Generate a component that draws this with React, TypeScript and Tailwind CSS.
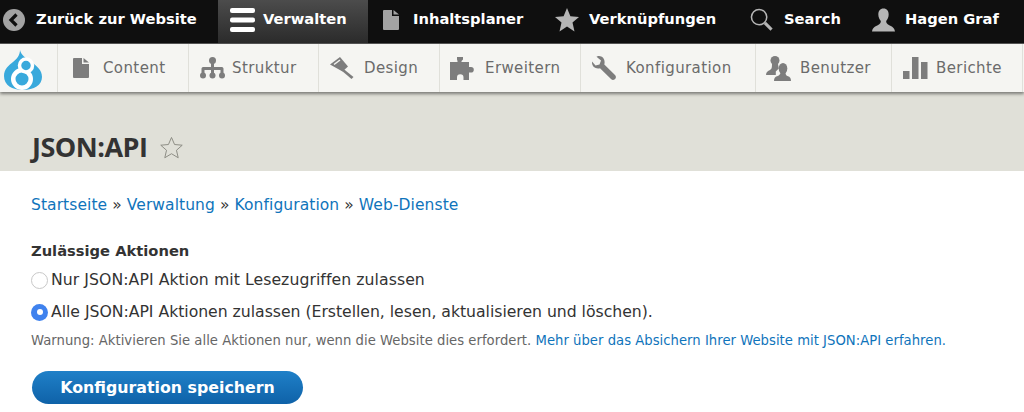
import { ReactNode } from "react";

const IconPage = ({ className }: { className: string }) => (
  <svg viewBox="0 0 16 20" className={className} fill="currentColor">
    <path d="M1 0h8v6h7v13a1 1 0 0 1-1 1H1a1 1 0 0 1-1-1V1a1 1 0 0 1 1-1z" />
    <path d="M10.5 0 16 4.5h-5.5z" />
  </svg>
);

const topItems: { label: string; width: string; gap: string; pad: string; icon: ReactNode; active?: boolean }[] = [
  {
    label: "Zurück zur Website",
    width: "w-[218px]",
    gap: "gap-[11px]",
    pad: "pl-[3px]",
    icon: (
      <svg viewBox="0 0 22 22" className="w-[22px] h-[22px]">
        <circle cx="11" cy="11" r="11" fill="#a3a3a3" />
        <path d="M13.5 5.5 8 11l5.5 5.5" fill="none" stroke="#0f0f0f" strokeWidth="3.2" />
      </svg>
    ),
  },
  {
    label: "Verwalten",
    width: "w-[150px]",
    gap: "gap-[8px]",
    pad: "pl-[12px]",
    active: true,
    icon: (
      <svg viewBox="0 0 25 24" className="w-[25px] h-[24px]" fill="#fff">
        <rect y="0" width="25" height="5" rx="2" />
        <rect y="9.5" width="25" height="5" rx="2" />
        <rect y="19" width="25" height="5" rx="2" />
      </svg>
    ),
  },
  {
    label: "Inhaltsplaner",
    width: "w-[172px]",
    gap: "gap-[14px]",
    pad: "pl-[15px]",
    icon: <IconPage className="w-[16px] h-[20px] text-[#a3a3a3]" />,
  },
  {
    label: "Verknüpfungen",
    width: "w-[195px]",
    gap: "gap-[10px]",
    pad: "pl-[15px]",
    icon: (
      <svg viewBox="0 0 24 24" className="w-[24px] h-[24px]" fill="#b5b5b5">
        <path d="M12 0l3.400 8.200 8.600.7-6.500 5.700 2 8.900L12 18.600l-7.500 4.900 2-8.900L0 8.900l8.600-.7z" />
      </svg>
    ),
  },
  {
    label: "Search",
    width: "w-[122px]",
    gap: "gap-[11px]",
    pad: "pl-[15px]",
    icon: (
      <svg viewBox="0 0 24 24" className="w-[23px] h-[23px]" fill="none" stroke="#b5b5b5">
        <circle cx="9.5" cy="9.5" r="8" strokeWidth="1.6" />
        <path d="M15.500 15.500 22.500 22.500" strokeWidth="3.2" />
      </svg>
    ),
  },
  {
    label: "Hagen Graf",
    width: "flex-1",
    gap: "gap-[10px]",
    pad: "pl-[15px]",
    icon: (
      <svg viewBox="0 0 24 24" className="w-[23px] h-[24px]" fill="#b5b5b5">
        <path d="M12 0c3.600 0 5.400 2.600 5.400 6.200 0 3-1.300 5.400-2.600 6.800 0 2 .6 3 3.200 4.400 3 1.400 5.400 2.400 6 6.600H0c.6-4.200 3-5.200 6-6.600 2.600-1.400 3.200-2.400 3.200-4.400C7.900 11.600 6.600 9.200 6.600 6.200 6.600 2.600 8.400 0 12 0z" />
      </svg>
    ),
  },
];

const menuItems: { label: string; width: string; gap: string; pad: string; icon: ReactNode }[] = [
  {
    label: "Content",
    width: "w-[131px]",
    gap: "gap-[14px]",
    pad: "pl-[15px]",
    icon: <IconPage className="w-[16px] h-[20px] text-[#7d7d7d]" />,
  },
  {
    label: "Struktur",
    width: "w-[130px]",
    gap: "gap-[7px]",
    pad: "pl-[11px]",
    icon: (
      <svg viewBox="0 0 25 22" className="w-[25px] h-[22px]" fill="#7d7d7d">
        <circle cx="12.500" cy="3.500" r="3.500" />
        <circle cx="3" cy="18.500" r="3" />
        <circle cx="12.500" cy="18.500" r="3" />
        <circle cx="22" cy="18.500" r="3" />
        <path d="M11 6h3v4h8a2 2 0 0 1 1.500 1.500V16h-3v-3h-6.500v3h-3v-3H4.500v3h-3v-4.500A2 2 0 0 1 3 10h8z" />
      </svg>
    ),
  },
  {
    label: "Design",
    width: "w-[121px]",
    gap: "gap-[10px]",
    pad: "pl-[11px]",
    icon: (
      <svg viewBox="0 0 24 22" className="w-[24px] h-[22px]">
        <path d="M0 7.500 10 0l8 9.500-5.500 5z" fill="#7d7d7d" />
        <path d="M4 7.500 10 3" fill="none" stroke="#f5f5f2" strokeWidth="1.5" />
        <path d="M13 11.500 23.500 20 21.500 22 11.500 13.500z" fill="#7d7d7d" />
      </svg>
    ),
  },
  {
    label: "Erweitern",
    width: "w-[141px]",
    gap: "gap-[10px]",
    pad: "pl-[10px]",
    icon: (
      <svg viewBox="0 0 25 23" className="w-[25px] h-[23px]" fill="#7d7d7d">
        <path d="M7 0h6v2.500l-1.500 1.500V5H19v5h2a2.800 2.800 0 1 1 0 5.600h-2V23h-5.500v-2.500a3.200 3.200 0 1 0-6.500 0V23H0V5h7.500V4L7 2.500z" />
      </svg>
    ),
  },
  {
    label: "Konfiguration",
    width: "w-[175px]",
    gap: "gap-[10px]",
    pad: "pl-[11px]",
    icon: (
      <svg viewBox="0 0 24 24" className="w-[24px] h-[24px]" fill="#7d7d7d">
        <path d="M7 0c-1 0-2 .3-2.500.7L9 4.500 7.500 8.500 3.500 9.500 0 5.500C-.5 9 2 12.500 6 12.500c1 0 1.500 0 2-.2L19 23c1.500 1.500 3.600 1 4.500-.5.700-1.200.5-2.500-.5-3.500L12.300 8.500C13.500 4 11 0 7 0z" />
      </svg>
    ),
  },
  {
    label: "Benutzer",
    width: "w-[136px]",
    gap: "gap-[9px]",
    pad: "pl-[10px]",
    icon: (
      <svg viewBox="0 0 25 25" className="w-[25px] h-[25px]" fill="#7d7d7d">
        <circle cx="9" cy="4.500" r="4.500" />
        <path d="M6 8h6l.8 4.500-3 3V19H0c0-3 2-4 4-5 1.500-1 2-2 2-6z" />
        <ellipse cx="17" cy="12.500" rx="4.300" ry="5.500" />
        <path d="M14.500 16.500h5c0 2 .5 3 2.500 3.800 1.800.7 3 1.700 3 4.700H8c0-3 1.200-4 3-4.700 2-.8 3.500-1.800 3.500-3.800z" />
      </svg>
    ),
  },
  {
    label: "Berichte",
    width: "w-[131px]",
    gap: "gap-[8px]",
    pad: "pl-[11px]",
    icon: (
      <svg viewBox="0 0 25 22" className="w-[25px] h-[22px]" fill="#7d7d7d">
        <rect x="0" y="14" width="6.500" height="8" />
        <rect x="9" y="0" width="6.500" height="22" />
        <rect x="18" y="5" width="6.500" height="17" />
      </svg>
    ),
  },
];

export default function App() {
  return (
    <div className="w-[1024px] h-[412px] overflow-hidden bg-white font-['DejaVu_Sans',sans-serif] text-[#333]">
      <div className="flex h-[44px] bg-[#0f0f0f] border-b border-[#555]">
        {topItems.map((item) => (
          <div
            key={item.label}
            className={`flex items-center pb-[4px] ${item.width} ${item.gap} ${item.pad} ${
              item.active ? "bg-linear-to-b from-[#4c4c4c] to-[#2b2b2b]" : ""
            }`}
          >
            {item.icon}
            <span className="text-[14.7px] font-bold text-white whitespace-nowrap">{item.label}</span>
          </div>
        ))}
      </div>

      <div className="flex h-[48px] bg-[#f5f5f2] shadow-[0_2px_3px_rgba(0,0,0,0.45)] relative">
        <div className="flex items-center justify-center w-[45px] pt-[3px]">
          <svg viewBox="0 0 38 40" className="w-[38px] h-[40px]">
            <path
              d="M16 0c1 5 6 8 11 12 6 4 11 8 11 15 0 8-8 13-19 13S0 35 0 26c0-7 5-11 9-14 4-3 7-7 7-12z"
              fill="#39a9dc"
            />
            <circle cx="18" cy="29" r="8.750" fill="#39a9dc" stroke="#fff" strokeWidth="4.500" />
            <circle cx="22" cy="15.500" r="6.500" fill="#39a9dc" stroke="#fff" strokeWidth="3.500" />
          </svg>
        </div>
        <div className="w-[13px] border-r border-[#e0e0da]" />
        {menuItems.map((item) => (
          <div key={item.label} className={`flex items-center border-r border-[#e0e0da] ${item.width} ${item.gap} ${item.pad}`}>
            {item.icon}
            <span className="text-[15px] text-[#6b6b6b] tracking-[0.4px] whitespace-nowrap">{item.label}</span>
          </div>
        ))}
      </div>

      <div className="flex items-center gap-[13px] h-[79px] pt-[32px] pl-[32px] bg-[#e0e0d8]">
        <h1 className="font-['Open_Sans',sans-serif] text-[27px] font-bold tracking-[-0.5px] text-[#333]">JSON:API</h1>
        <svg viewBox="0 0 24 24" className="w-[23px] h-[23px]" fill="none" stroke="#8a8a82" strokeWidth="1">
          <path d="M12 1.500l3.200 7.400 8 .7-6 5.300 1.800 7.800-7-4.200-7 4.200 1.800-7.800-6-5.300 8-.7z" />
        </svg>
      </div>

      <div className="pl-[31px] pt-[24px]">
        <nav className="text-[15.5px] tracking-[0.08px] leading-[20px] text-[#333]">
          <a className="text-[#0f74bb]">Startseite</a> » <a className="text-[#0f74bb]">Verwaltung</a> »{" "}
          <a className="text-[#0f74bb]">Konfiguration</a> » <a className="text-[#0f74bb]">Web-Dienste</a>
        </nav>

        <h2 className="mt-[27px] text-[14.7px] leading-[18px] font-bold text-[#333]">Zulässige Aktionen</h2>

        <div className="mt-[11px] flex flex-col gap-[14px] text-[15.7px] leading-[18px]">
          <label className="flex items-center gap-[3px] tracking-[0.06px]">
            <span className="w-[17px] h-[17px] rounded-full border border-[#c8c8c8] bg-white" />
            Nur JSON:API Aktion mit Lesezugriffen zulassen
          </label>
          <label className="flex items-center gap-[3px] tracking-[-0.03px]">
            <span className="w-[17px] h-[17px] rounded-full bg-[#3f82ee] flex items-center justify-center">
              <span className="w-[6px] h-[6px] rounded-full bg-white" />
            </span>
            Alle JSON:API Aktionen zulassen (Erstellen, lesen, aktualisieren und löschen).
          </label>
        </div>

        <p className="mt-[11px] text-[13.2px] tracking-[0.025px] leading-[18px] text-[#666]">
          Warnung: Aktivieren Sie alle Aktionen nur, wenn die Website dies erfordert.{" "}
          <a className="text-[#0f74bb]">Mehr über das Absichern Ihrer Website mit JSON:API erfahren.</a>
        </p>

        <button className="mt-[21px] ml-[1px] block w-[271px] h-[33px] rounded-full bg-linear-to-b from-[#1f80c8] to-[#0f62a8] text-white font-bold text-[15.8px]">
          Konfiguration speichern
        </button>
      </div>
    </div>
  );
}
